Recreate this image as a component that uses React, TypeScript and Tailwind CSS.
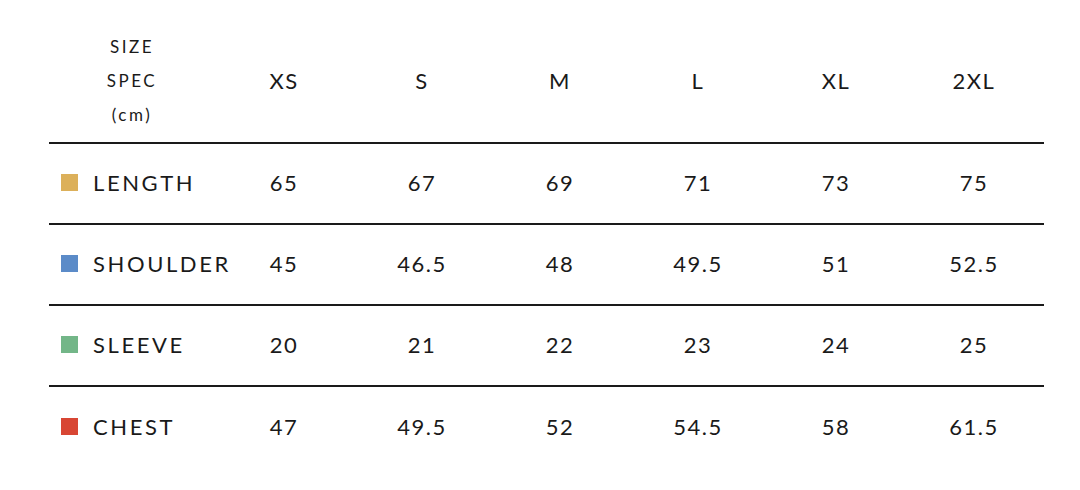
import React from "react";

const sizes = ["XS", "S", "M", "L", "XL", "2XL"];
const rows = [
  { label: "LENGTH", color: "bg-[#dcb05a]", values: ["65", "67", "69", "71", "73", "75"] },
  { label: "SHOULDER", color: "bg-[#5b8bc8]", values: ["45", "46.5", "48", "49.5", "51", "52.5"] },
  { label: "SLEEVE", color: "bg-[#73b688]", values: ["20", "21", "22", "23", "24", "25"] },
  { label: "CHEST", color: "bg-[#d84634]", values: ["47", "49.5", "52", "54.5", "58", "61.5"] },
];

export default function App() {
  return (
    <div className="w-[1080px] h-[490px] bg-white text-[#1a1a1a] font-['Lato','Liberation_Sans',sans-serif]">
      <div className="ml-[49px] w-[995px]">
        <div className="grid grid-cols-[166px_repeat(6,138px)] h-[144px] pt-[30px] border-b-2 border-[#1a1a1a]">
          <div className="flex flex-col items-center text-[17px] tracking-[2.5px] leading-[34px]">
            <span>SIZE</span>
            <span>SPEC</span>
            <span>(cm)</span>
          </div>
          {sizes.map((s) => (
            <div key={s} className="flex justify-center pt-[34px] text-[22px] leading-[34px] tracking-[1.5px]">
              {s}
            </div>
          ))}
        </div>
        {rows.map((r, i) => (
          <div
            key={r.label}
            className={`grid grid-cols-[166px_repeat(6,138px)] h-[81px] pb-[3px] items-center ${
              i < rows.length - 1 ? "border-b-2 border-[#1a1a1a]" : ""
            }`}
          >
            <div className="flex items-center pl-[12px] gap-[15px] whitespace-nowrap">
              <span className={`shrink-0 w-[17px] h-[17px] ${r.color}`} />
              <span className="text-[22px] tracking-[2.6px]">{r.label}</span>
            </div>
            {r.values.map((v, j) => (
              <div key={j} className="flex justify-center text-[22px] tracking-[1.5px]">
                {v}
              </div>
            ))}
          </div>
        ))}
      </div>
    </div>
  );
}
